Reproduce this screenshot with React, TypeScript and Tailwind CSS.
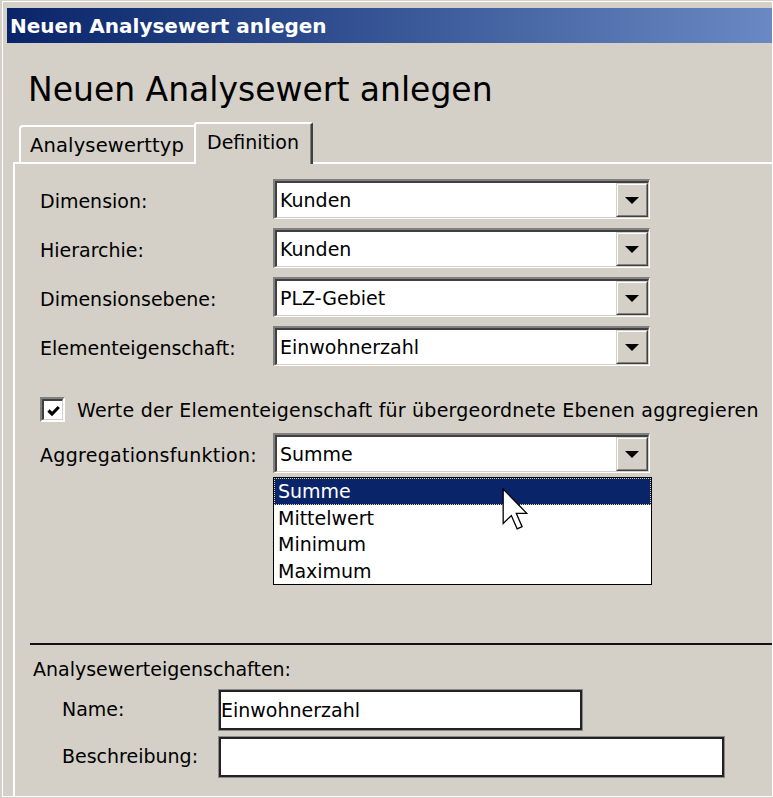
import React from 'react';

const rows = [
  { label: 'Dimension:', value: 'Kunden' },
  { label: 'Hierarchie:', value: 'Kunden' },
  { label: 'Dimensionsebene:', value: 'PLZ-Gebiet' },
  { label: 'Elementeigenschaft:', value: 'Einwohnerzahl' },
];

const options = ['Summe', 'Mittelwert', 'Minimum', 'Maximum'];

function DropButton() {
  return (
    <div className="w-[32px] h-full border-t border-l border-t-[#d4d0c8] border-l-[#d4d0c8] border-b border-r border-b-[#404040] border-r-[#404040]">
      <div className="w-full h-full border-t border-l border-t-white border-l-white border-b border-r border-b-[#808080] border-r-[#808080] bg-[#d4d0c8] flex items-center justify-center">
        <svg width="14" height="7" viewBox="0 0 14 7">
          <path d="M0 0 H14 L7 7 Z" fill="#000" />
        </svg>
      </div>
    </div>
  );
}

function Combo({ value, children }: { value: string; children?: React.ReactNode }) {
  return (
    <div className="relative w-[377px] h-[40px] border-t-2 border-l-2 border-t-[#808080] border-l-[#808080] border-b border-r border-b-white border-r-white">
      <div className="h-full border-t-2 border-l-2 border-t-[#404040] border-l-[#404040] border-b border-r border-b-[#d4d0c8] border-r-[#d4d0c8] bg-white flex items-stretch">
        <div className="flex-1 flex items-center pl-[3px] text-[19px] text-black">{value}</div>
        <DropButton />
      </div>
      {children}
    </div>
  );
}

function TextBox({ value, width }: { value?: string; width: string }) {
  return (
    <div className={`${width} h-[42px] border border-[#8a8a8a]`}>
      <div className="h-full border-2 border-[#222] bg-white flex items-center text-[19px] text-black">
        {value}
      </div>
    </div>
  );
}

function Cursor() {
  return (
    <svg width="26" height="43" viewBox="0 0 12 20" className="absolute left-[228px] top-[10px]">
      <path
        d="M0.5 0.5 L0.5 16.5 L4.3 12.8 L7 19 L9.3 18 L6.6 11.8 L11.5 11.8 Z"
        fill="#fff"
        stroke="#000"
        strokeWidth="0.6"
        strokeLinejoin="miter"
      />
    </svg>
  );
}

export default function App() {
  return (
    <div className="w-[773px] h-[798px] bg-[#d4d0c8] pt-[1px] pl-[2px] overflow-hidden font-['DejaVu_Sans',sans-serif] text-black">
      <div className="w-[771px] h-[796px] border border-white pl-[4px] pt-[6px] flex flex-col">
        {/* title bar */}
        <div className="h-[35px] shrink-0 bg-gradient-to-r from-[#0a246a] to-[#6a89c3] flex items-center pl-[3px]">
          <span className="text-white font-bold text-[20px] leading-none">Neuen Analysewert anlegen</span>
        </div>

        <h1 className="mt-[30px] pl-[21px] text-[33px] leading-none font-normal">Neuen Analysewert anlegen</h1>

        <div className="ml-[6px] mt-[16px] flex-1 flex flex-col">
          {/* tabs */}
          <div className="flex items-end pl-[6px]">
            <div className="w-[175px] h-[37px] border-t-2 border-l-2 border-white rounded-tl-[4px] pl-[9px] pt-[9px] text-[19.5px] tracking-[0.15px] leading-none">
              Analysewerttyp
            </div>
            <div className="relative z-10 w-[119px] h-[42px] -mb-[2px] bg-[#d4d0c8] border-t-2 border-l-2 border-white rounded-tl-[3px] rounded-tr-[2px] border-r-2 border-r-[#404040] shadow-[inset_-1px_0_0_#808080] pl-[11px] pt-[9px] text-[19px] leading-none">
              Definition
            </div>
          </div>

          {/* panel */}
          <div className="flex-1 border-t-2 border-l-2 border-white pt-[15px] flex flex-col">
            <div className="pl-[25px] flex flex-col gap-[9px]">
              {rows.map(r => (
                <div key={r.label} className="flex items-center">
                  <div className="w-[233px] text-[19px] leading-[22px] pt-[4px]">{r.label}</div>
                  <Combo value={r.value} />
                </div>
              ))}
            </div>

            <div className="pl-[25px] mt-[31px] h-[25px] flex items-center">
              <div className="w-[25px] h-[25px] border-t-2 border-l-2 border-t-[#808080] border-l-[#808080] border-b-2 border-r-2 border-b-white border-r-white">
                <div className="w-full h-full border-t-2 border-l-2 border-t-[#404040] border-l-[#404040] border-b border-r border-b-[#d4d0c8] border-r-[#d4d0c8] bg-white flex items-center justify-center">
                  <svg width="15" height="15" viewBox="0 0 15 15">
                    <path d="M2.5 7.5 L6 11 L12.8 4" fill="none" stroke="#000" strokeWidth="3.2" />
                  </svg>
                </div>
              </div>
              <span className="ml-[12px] text-[19px] leading-[22px] tracking-[0.22px]">
                Werte der Elementeigenschaft für übergeordnete Ebenen aggregieren
              </span>
            </div>

            <div className="pl-[25px] mt-[11px] flex items-center relative z-20">
              <div className="w-[233px] text-[19px] leading-[22px] pt-[4px] tracking-[0.3px]">Aggregationsfunktion:</div>
              <Combo value="Summe">
                <div className="absolute left-[-2px] top-[42px] w-[379px] h-[108px] border border-black bg-white">
                  {options.map((o, i) => (
                    <div
                      key={o}
                      className={
                        i === 0
                          ? 'h-[26.5px] bg-[#0a246a] text-white border border-dotted border-[#e2d78e] pl-[3px] flex items-center text-[19px]'
                          : 'h-[26.5px] pl-[4px] flex items-center text-[19px]'
                      }
                    >
                      {o}
                    </div>
                  ))}
                  <Cursor />
                </div>
              </Combo>
            </div>

            <div className="ml-[15px] mt-[170px] h-[2px] bg-[#111]" />

            <div className="ml-[18px] mt-[13px] text-[19px] leading-[22px]">Analysewerteigenschaften:</div>

            <div className="pl-[47px] mt-[9px] flex items-center">
              <div className="w-[156px] text-[19px] leading-[22px] pb-[3px]">Name:</div>
              <TextBox value="Einwohnerzahl" width="w-[365px]" />
            </div>
            <div className="pl-[47px] mt-[5px] flex items-center">
              <div className="w-[156px] text-[19px] leading-[22px] pb-[3px]">Beschreibung:</div>
              <TextBox width="w-[507px]" />
            </div>
          </div>
        </div>
      </div>
    </div>
  );
}
